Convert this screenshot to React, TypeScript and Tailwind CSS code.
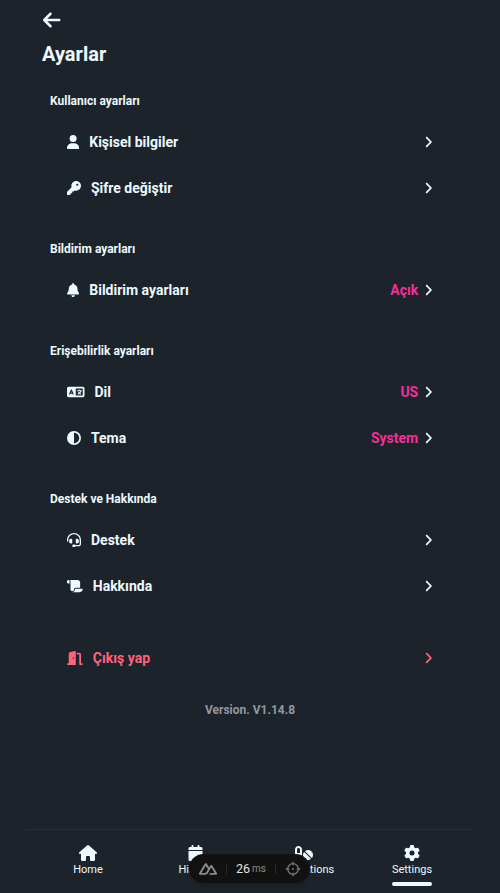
import type { ReactNode } from "react";
import type { IconType } from "react-icons";
import {
  FaAngleRight,
  FaArrowLeft,
  FaBell,
  FaCalendar,
  FaCircleHalfStroke,
  FaDoorOpen,
  FaGear,
  FaHeadset,
  FaHouse,
  FaKey,
  FaLanguage,
  FaPills,
  FaScroll,
  FaUser,
} from "react-icons/fa6";

interface RowProps {
  icon: IconType;
  size: string;
  label: string;
  value?: string;
}

function Row({ icon: Icon, size, label, value }: RowProps) {
  return (
    <button className="flex h-[46px] w-full items-center px-[25px] text-left text-sm font-bold">
      <Icon className={`h-[14px] shrink-0 ${size}`} />
      <span className="ml-[10px] flex-1">{label}</span>
      {value && <span className="mr-[6px] text-[#f43098]">{value}</span>}
      <FaAngleRight className="h-[14px] w-[8.75px] shrink-0" />
    </button>
  );
}

function Card({ children }: { children: ReactNode }) {
  return <div className="rounded-lg py-[6px] shadow-[0_1px_3px_0_rgba(0,0,0,0.08)]">{children}</div>;
}

function Section({ title, children }: { title: string; children: ReactNode }) {
  return (
    <section className="mb-[23px]">
      <h2 className="mb-[3px] px-2 text-xs leading-[18px] font-bold">{title}</h2>
      <Card>{children}</Card>
    </section>
  );
}

function Tab({ icon: Icon, size, label, active }: { icon: IconType; size: string; label: string; active?: boolean }) {
  return (
    <button className="flex flex-1 flex-col items-center pt-[15px]">
      <Icon className={`h-4 ${size}`} />
      <span className="mt-px text-[11px] leading-4 font-normal">{label}</span>
      {active && <span className="mt-1 h-1 w-10 rounded-full bg-[#ecf9ff]" />}
    </button>
  );
}

function DevToolbar() {
  return (
    <div className="absolute top-[854px] left-[189px] flex h-[29px] w-[121px] items-center rounded-full bg-[#111] text-[#8b8b8b] shadow-md">
      <svg viewBox="0 4 24 16" className="ml-[10px] h-3 w-[18px] shrink-0" fill="currentColor">
        <path d="M13.464 19.83h8.922c.283 0 .562-.073.807-.21a1.6 1.6 0 0 0 .591-.574 1.53 1.53 0 0 0 .216-.783 1.53 1.53 0 0 0-.217-.782L17.792 7.414a1.6 1.6 0 0 0-.591-.573 1.65 1.65 0 0 0-.807-.21c-.283 0-.562.073-.807.21a1.6 1.6 0 0 0-.59.573L13.463 9.99 10.47 4.953a1.6 1.6 0 0 0-.591-.573 1.65 1.65 0 0 0-.807-.21c-.284 0-.562.073-.807.21a1.6 1.6 0 0 0-.591.573L.216 17.481a1.53 1.53 0 0 0-.217.782c0 .275.074.545.216.783a1.6 1.6 0 0 0 .59.574c.246.137.525.21.808.21h5.6c2.22 0 3.856-.946 4.982-2.79l2.733-4.593 1.464-2.457 4.395 7.382h-5.859Zm-6.341-2.46-3.908-.002 5.858-9.842 2.923 4.921-1.957 3.29c-.748 1.196-1.597 1.632-2.916 1.632" />
      </svg>
      <span className="ml-[9px] h-[10px] w-px shrink-0 bg-[#2a2a2a]" />
      <span className="ml-[9px] w-[14px] shrink-0 text-[12.5px] leading-4 font-normal text-[#e4e4e4]">26</span>
      <span className="ml-[2px] w-[14px] shrink-0 text-[10px] leading-4 font-normal text-[#8b8b8b]">ms</span>
      <span className="ml-[9px] h-[10px] w-px shrink-0 bg-[#2a2a2a]" />
      <svg viewBox="0 0 16 16" className="ml-[9px] h-4 w-4 shrink-0 text-[#777]" fill="none" stroke="currentColor" strokeWidth="1.3">
        <circle cx="8" cy="8" r="5.3" />
        <path d="M8 .8v3.4M8 11.8v3.4M.8 8h3.4M11.8 8h3.4" />
        <circle cx="8" cy="8" r="1" fill="currentColor" stroke="none" />
      </svg>
    </div>
  );
}

export default function App() {
  return (
    <div className="relative flex h-[893px] w-[500px] flex-col overflow-hidden bg-[#1d232a] font-[Roboto,sans-serif] text-[#ecf9ff]">
      <main className="flex-1 px-[42px] pt-[10px]">
        <FaArrowLeft className="ml-px h-5 w-[17.5px]" />
        <h1 className="mt-[10px] mb-6 text-xl leading-7 font-bold">Ayarlar</h1>
        <Section title="Kullanıcı ayarları">
          <Row icon={FaUser} size="w-[12.25px]" label="Kişisel bilgiler" />
          <Row icon={FaKey} size="w-[14px]" label="Şifre değiştir" />
        </Section>
        <Section title="Bildirim ayarları">
          <Row icon={FaBell} size="w-[12.25px]" label="Bildirim ayarları" value="Açık" />
        </Section>
        <Section title="Erişebilirlik ayarları">
          <Row icon={FaLanguage} size="w-[17.5px]" label="Dil" value="US" />
          <Row icon={FaCircleHalfStroke} size="w-[14px]" label="Tema" value="System" />
        </Section>
        <Section title="Destek ve Hakkında">
          <Row icon={FaHeadset} size="w-[14px]" label="Destek" />
          <Row icon={FaScroll} size="w-[15.75px]" label="Hakkında" />
        </Section>
        <div className="-mt-[9px] text-[#ff637d]">
          <Card>
            <Row icon={FaDoorOpen} size="w-[15.75px]" label="Çıkış yap" />
          </Card>
        </div>
        <p className="mt-[15px] text-center text-xs leading-4 font-bold text-[#9099a1]">Version. V1.14.8</p>
      </main>
      <nav className="mx-[26px] flex h-16 border-t border-[#292e35] px-2">
        <Tab icon={FaHouse} size="w-[18px] mr-px" label="Home" />
        <Tab icon={FaCalendar} size="w-[15px] mr-px" label="History" />
        <Tab icon={FaPills} size="w-[18px] mr-px" label="Medications" />
        <Tab icon={FaGear} size="w-4" label="Settings" active />
      </nav>
      <DevToolbar />
    </div>
  );
}
